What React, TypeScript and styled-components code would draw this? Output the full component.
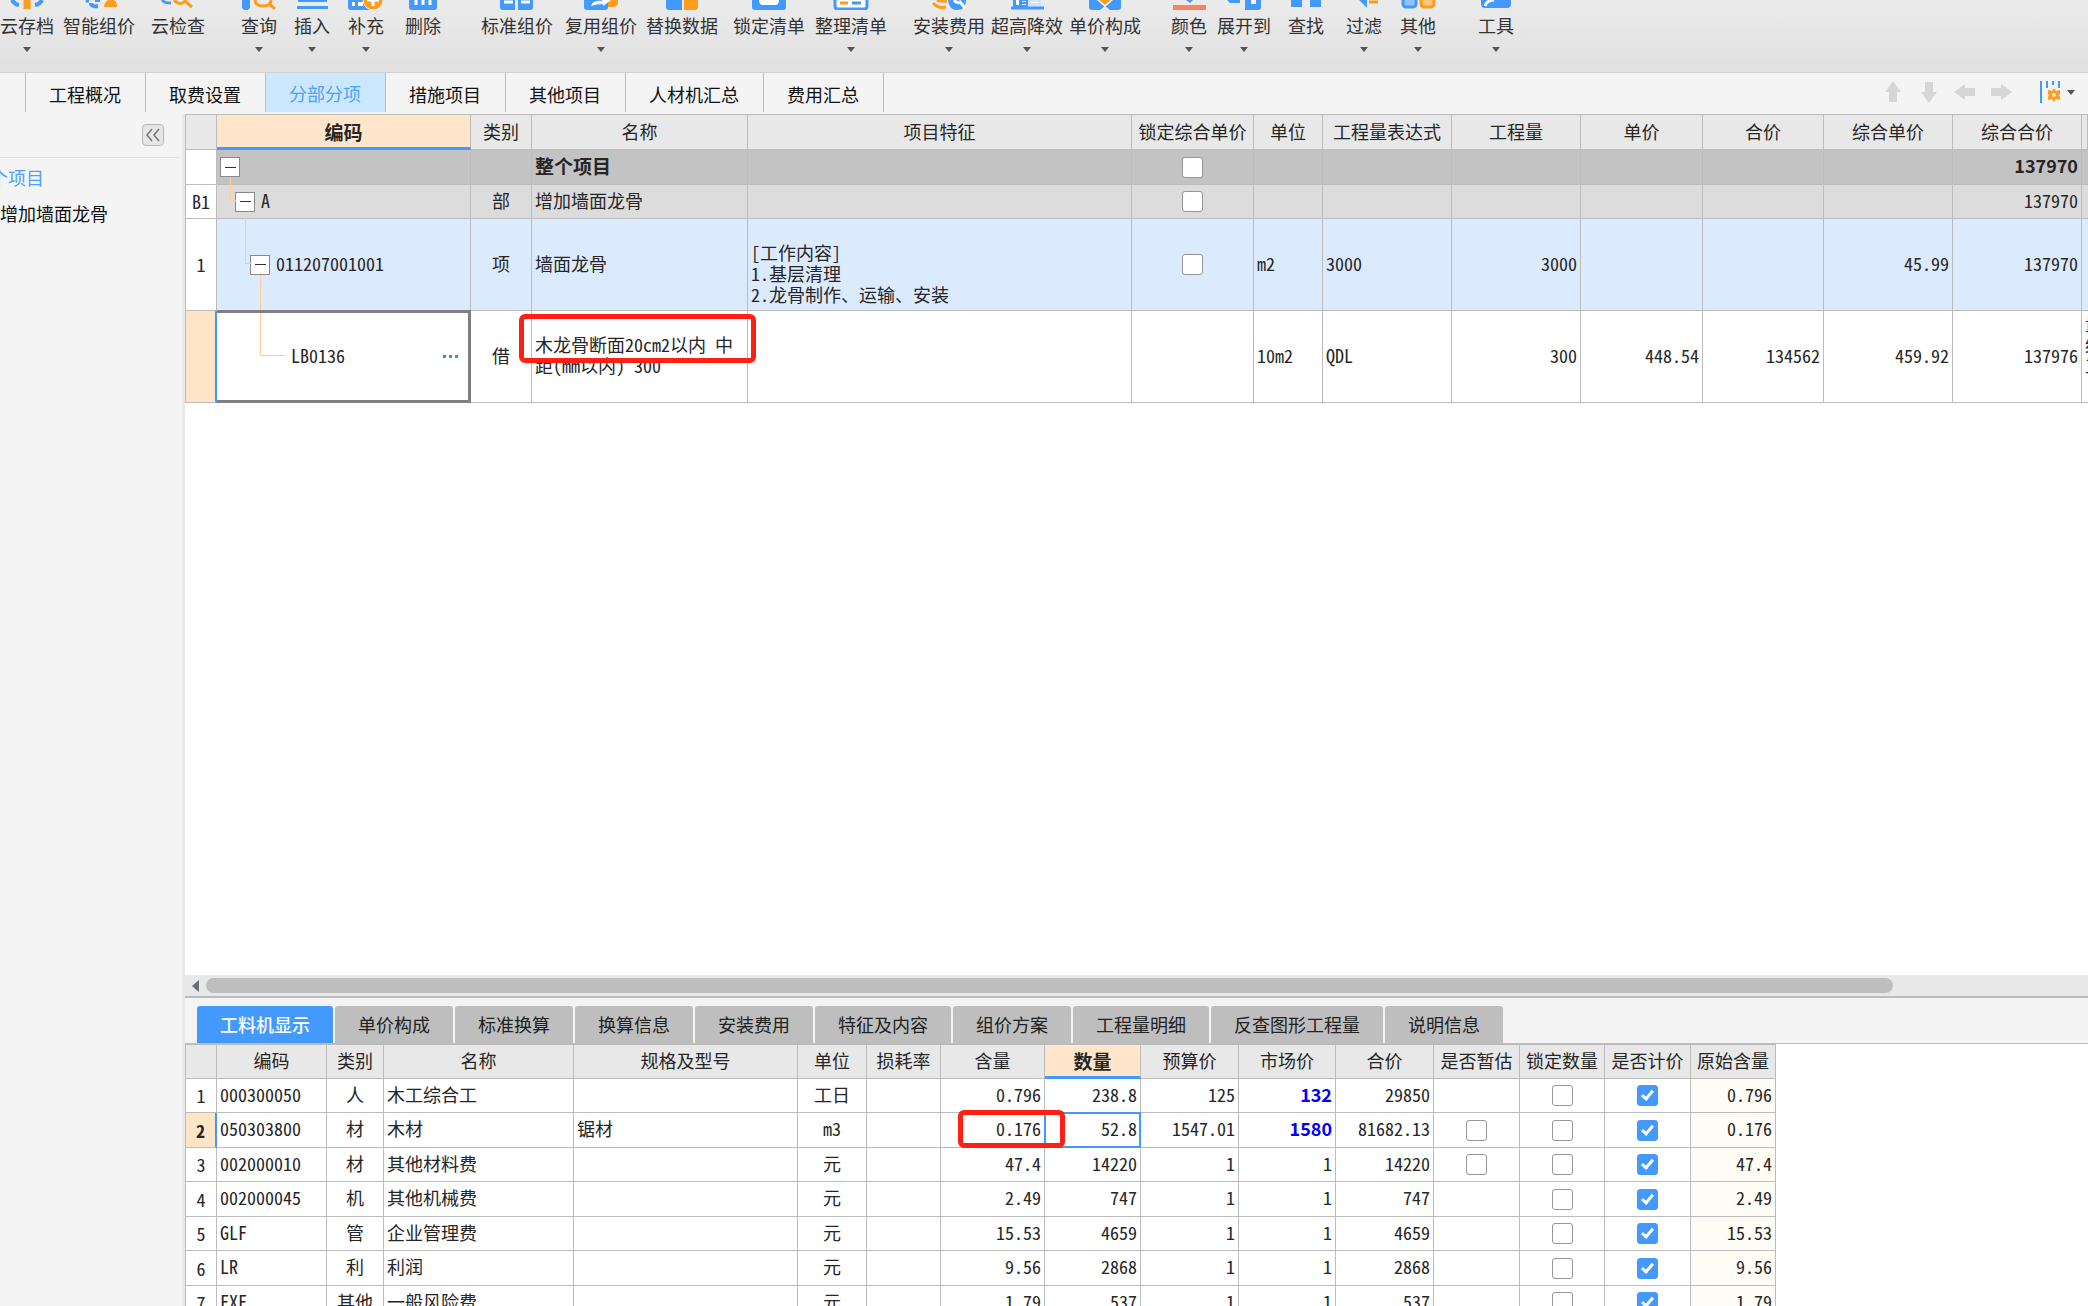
import React from 'react';
import styled, { createGlobalStyle, css } from 'styled-components';

const BLUE = '#4499ff';
const ORANGE = '#ff9c1c';
const LINE = '#bcbcbc';
const RED = '#ff2015';
const UI = '"Noto Sans CJK SC", sans-serif';
const MONO = '"Noto Sans Mono CJK SC", "Noto Sans CJK SC", monospace';

const GlobalStyle = createGlobalStyle`
  *, *::before, *::after { box-sizing: border-box; }
  body { margin: 0; background: #f4f4f4; overflow: hidden; }
  button { margin: 0; padding: 0; border: 0; background: none; font: inherit; color: inherit; cursor: pointer; }
`;

const Page = styled.div`
  display: flex;
  flex-direction: column;
  height: 100vh;
  overflow: hidden;
  font-family: ${UI};
  font-size: 18px;
  line-height: 24px;
  color: #262626;
`;

/* ---------- toolbar ---------- */

const Toolbar = styled.header`
  display: flex;
  flex: none;
  align-items: flex-start;
  height: 73px;
  background: linear-gradient(#ebebeb, #e0e0e0);
  border-bottom: 1px solid #d2d2d2;
`;

const Tool = styled.button<{ $before: number }>`
  display: flex;
  flex: none;
  flex-direction: column;
  align-items: center;
  margin-left: ${(p) => p.$before}px;
  white-space: nowrap;
  color: #333;
`;

const ToolIcon = styled.svg`
  display: block;
  width: 36px;
  height: 10px;
`;

const ToolLabel = styled.span`
  margin-top: 3px;
`;

const Caret = styled.span`
  width: 0;
  height: 0;
  border: 4px solid transparent;
  border-top: 5px solid #555;
  border-bottom: 0;
`;

const ToolCaret = styled(Caret)`
  margin-top: 10px;
`;

const tools: { label: string; before: number; menu?: boolean; icon: React.ReactNode }[] = [
  {
    label: '云存档', before: 0, menu: true,
    icon: <><path d="M3 0Q5 4 10 5M33 0Q31 4 26 5" stroke={BLUE} strokeWidth="4" fill="none" /><path d="M14.500 0h7v9h-7z" fill={ORANGE} /></>,
  },
  {
    label: '智能组价', before: 9,
    icon: <><path d="M5 0L8 1M10 3Q10 7 17 6M14 0h5" stroke={BLUE} strokeWidth="4" fill="none" /><path d="M27 0h6q4 4 4 7H23q0-4 4-7z" fill={ORANGE} /></>,
  },
  {
    label: '云检查', before: 16,
    icon: <><path d="M2 0Q4 3 11 3" stroke={BLUE} strokeWidth="3" fill="none" /><path d="M14 0Q20 7 26 0M26 2l6 5" stroke={ORANGE} strokeWidth="3" fill="none" /></>,
  },
  {
    label: '查询', before: 36, menu: true,
    icon: <><path d="M1 0h8v8l-2 2H3L1 8z" fill={BLUE} /><path d="M14 0q0 6 8 6t8-6M28 4l6 5" stroke={ORANGE} strokeWidth="3" fill="none" /></>,
  },
  {
    label: '插入', before: 17, menu: true,
    icon: <path d="M4 0h29v2H4zM3 6h31v3H3z" fill={BLUE} />,
  },
  {
    label: '补充', before: 18, menu: true,
    icon: <><path d="M0 0h22v10H3q-3 0-3-3z" fill={BLUE} /><path d="M4 2h3v4H4zM10 2h5v4h-5z" fill="#fff" /><circle cx="25" cy="0" r="10" fill={ORANGE} stroke="#eee" /><path d="M19 0h12M25 0v6" stroke="#fff" strokeWidth="3" /></>,
  },
  {
    label: '删除', before: 21,
    icon: <><path d="M4 0h28v7q0 3-3 3H7q-3 0-3-3z" fill={BLUE} /><path d="M11 0v5M18 0v5M25 0v5" stroke="#fff" strokeWidth="3" /></>,
  },
  {
    label: '标准组价', before: 40,
    icon: <><path d="M1 0h15v10H4q-3 0-3-3zM19 0h15v7q0 3-3 3H19z" fill={BLUE} /><path d="M5 2h9M22 2h9" stroke="#fff" strokeWidth="3" /></>,
  },
  {
    label: '复用组价', before: 12, menu: true,
    icon: <><path d="M24 0h11v3q0 4-6 4h-5z" fill={ORANGE} /><path d="M1 0h24v7q0 3-3 3H4q-3 0-3-3z" fill={BLUE} /><path d="M8 6q2-6 11-5V0h9l-8 6V4q-7 0-12 2z" fill="#fff" /></>,
  },
  {
    label: '替换数据', before: 9,
    icon: <><path d="M2 0h16v10H5q-3 0-3-3z" fill={BLUE} /><path d="M20 0h14v7q0 3-3 3H20z" fill={ORANGE} /></>,
  },
  {
    label: '锁定清单', before: 15,
    icon: <><path d="M1 0h34v7q0 3-3 3H4q-3 0-3-3z" fill={BLUE} /><path d="M8 0h20q0 5-4 5H12q-4 0-4-5z" fill="#fff" /></>,
  },
  {
    label: '整理清单', before: 10, menu: true,
    icon: <><path d="M2 0v6q0 3 3 3h26q3 0 3-3V0" fill="#fff" stroke={BLUE} strokeWidth="3" /><path d="M7 3h8" stroke={ORANGE} strokeWidth="3" /><path d="M19 3h9" stroke={BLUE} strokeWidth="3" /></>,
  },
  {
    label: '安装费用', before: 26, menu: true,
    icon: <><path d="M2 3q5 6 13 4M6 0q5 2 10 1" stroke={ORANGE} strokeWidth="3" fill="none" /><path d="M17 0q1 10 9 10 9 0 9-10z" fill={BLUE} /><path d="M23 0q3 4 6 2l5 6" stroke="#fff" strokeWidth="3" fill="none" /></>,
  },
  {
    label: '超高降效', before: 6, menu: true,
    icon: <><path d="M4 0h15v8H4z" fill={BLUE} /><path d="M19 0h13v7H19z" fill="#cfe5ff" /><path d="M2 8h33" stroke={BLUE} strokeWidth="3" /><path d="M7 0h3v5H7zM13 1h4v1h-4zM13 4h4v1h-4zM21 2h9v1h-9z" fill="#fff" /></>,
  },
  {
    label: '单价构成', before: 6, menu: true,
    icon: <><path d="M2 0h32v7q0 3-3 3h-8l-5-4-5 4H5q-3 0-3-3z" fill={BLUE} /><path d="M10 0h16l-8 7z" fill="#fff" /><path d="M12 0h12l-6 5z" fill={ORANGE} /></>,
  },
  {
    label: '颜色', before: 30, menu: true,
    icon: <><path d="M15 0h7l-3 3z" fill={BLUE} /><path d="M2 5h33v5H2z" fill="#f98461" /></>,
  },
  {
    label: '展开到', before: 10, menu: true,
    icon: <><path d="M1 0h13v3H4zM19 0h16v7q0 3-3 3H19z" fill={BLUE} /><path d="M25 0h5v4h-5z" fill="#fff" /></>,
  },
  {
    label: '查找', before: 17,
    icon: <path d="M3 0h11v7H3zM22 0h11v7H22z" fill={BLUE} />,
  },
  {
    label: '过滤', before: 22, menu: true,
    icon: <><path d="M13 0h8v8z" fill={BLUE} /><path d="M23 2h9" stroke={ORANGE} strokeWidth="3" /></>,
  },
  {
    label: '其他', before: 18, menu: true,
    icon: <><rect x="3" y="-8" width="13" height="15" rx="3" fill="#8fc4ff" stroke={BLUE} strokeWidth="3" /><rect x="21" y="-8" width="13" height="15" rx="3" fill="#ffc57d" stroke={ORANGE} strokeWidth="3" /></>,
  },
  {
    label: '工具', before: 42, menu: true,
    icon: <><path d="M3 0h30v4q0 4-4 4H7q-4 0-4-4z" fill={BLUE} /><path d="M7 6q2-6 9-6" stroke="#fff" strokeWidth="3" fill="none" /></>,
  },
];

/* ---------- page tabs ---------- */

const PageTabs = styled.nav`
  display: flex;
  flex: none;
  height: 41px;
  background: #f4f4f4;
`;

const PageTab = styled.button<{ $active?: boolean }>`
  flex: none;
  height: 39px;
  padding: ${(p) => (p.$active ? 0 : 2)}px 24px 0 23px;
  border-right: 1px solid ${LINE};
  white-space: nowrap;
  color: ${(p) => (p.$active ? '#4fa0ff' : '#111')};
  background: ${(p) => (p.$active ? '#cce8ff' : 'transparent')};
`;

const PageTabStub = styled.button`
  flex: none;
  width: 26px;
  height: 39px;
  border-right: 1px solid ${LINE};
`;

const TabActions = styled.div`
  display: flex;
  align-items: center;
  gap: 12px;
  margin-left: auto;
  padding: 0 13px 3px 0;

  svg { display: block; }
`;

const SettingsButton = styled.button`
  display: flex;
  align-items: center;
  gap: 7px;
  margin-left: 15px;
`;

/* ---------- body ---------- */

const Body = styled.div`
  display: flex;
  flex: 1;
  min-height: 0;
`;

const Sidebar = styled.aside`
  flex: none;
  width: 185px;
  overflow: hidden;
  border-right: 3px solid #e9e9e9;
`;

const SidebarHead = styled.div`
  display: flex;
  justify-content: flex-end;
  height: 44px;
  margin-right: 3px;
  padding: 10px 15px 0 0;
  border-bottom: 1px solid #dedede;
`;

const Collapse = styled.button`
  display: grid;
  place-items: center;
  width: 22px;
  height: 22px;
  border: 1px solid #b9b9b9;
  border-radius: 4px;
  background: #e6e6e6;
`;

const SideList = styled.ul`
  display: flex;
  flex-direction: column;
  align-items: flex-start;
  gap: 12px;
  margin: 7px 0 0;
  padding: 0;
  list-style: none;
  white-space: nowrap;
`;

const SideRoot = styled.li`
  width: 44px;
  overflow: hidden;
  direction: rtl;
  color: #4fa0ff;
`;

const SideItem = styled.li`
  color: #111;
`;

const Main = styled.main`
  display: flex;
  flex: 1;
  flex-direction: column;
  min-width: 0;
`;

const GridArea = styled.section`
  flex: 1;
  min-height: 0;
  overflow: hidden;
  background: #fff;
`;

const Grid = styled.table<{ $full?: boolean }>`
  width: ${(p) => (p.$full ? '100%' : 'auto')};
  table-layout: fixed;
  border-collapse: separate;
  border-spacing: 0;
  border-top: 1px solid ${LINE};
  font-family: ${MONO};
  line-height: 21px;
`;

const HeadCell = styled.th<{ $active?: boolean }>`
  padding: 0 0 2px;
  border-right: 1px solid ${LINE};
  border-bottom: 1px solid ${LINE};
  background: #e8e8e8;
  font-weight: 400;
  white-space: nowrap;
  overflow: hidden;

  &:first-child { border-left: 1px solid ${LINE}; }

  ${(p) => p.$active && css`
    padding-bottom: 0;
    border-bottom: 3px solid ${BLUE};
    background: #ffe6ca;
    font-size: 19px;
    font-weight: 700;
  `}
`;

const Row = styled.tr<{ $h: number; $bg?: string; $bold?: boolean }>`
  height: ${(p) => p.$h}px;
  background: ${(p) => p.$bg || '#fff'};
  ${(p) => p.$bold && css`font-family: ${UI}; font-weight: 700;`}
`;

const Cell = styled.td<{ $align?: 'left' | 'center' | 'right'; $bg?: string; $strong?: boolean }>`
  position: relative;
  padding: 0 3px 3px;
  border-right: 1px solid ${LINE};
  border-bottom: 1px solid ${LINE};
  text-align: ${(p) => p.$align || 'left'};
  white-space: pre-line;
  ${(p) => p.$bg && css`background: ${p.$bg};`}
  ${(p) => p.$strong && css`font-family: ${UI}; font-weight: 700; color: #0000ff;`}
`;

const TickCell = styled(Cell)`
  padding: 0;
`;

const RowNo = styled.th<{ $current?: boolean }>`
  padding: 0;
  border: 1px solid ${LINE};
  border-top: 0;
  background: #fff;
  font-weight: 400;
  ${(p) => p.$current && css`
    border-right: 2px solid ${BLUE};
    background: #ffe5c8;
    font-weight: 700;
  `}
`;

const ClippedCell = styled(Cell)`
  padding-top: 2px;
  border-right: 0;
  overflow: hidden;
  vertical-align: top;
  white-space: nowrap;
`;

const BigText = styled.span`
  font-size: 19px;
`;

const Tick = styled.input`
  appearance: none;
  display: block;
  position: relative;
  width: 21px;
  height: 21px;
  margin: 0 auto;
  border: 1px solid #969696;
  border-radius: 3px;
  background: #fff;

  &:checked { border-color: ${BLUE}; background: ${BLUE}; }
  &:checked::after {
    content: '';
    position: absolute;
    left: 6px;
    top: 2px;
    width: 7px;
    height: 12px;
    border: solid #fff;
    border-width: 0 3px 3px 0;
    transform: rotate(40deg);
  }
`;

/* ---------- tree column ---------- */

const TreeCell = styled(Cell)`
  padding-bottom: 0;
`;

const TreeLine = styled.div<{ $indent: number }>`
  display: flex;
  align-items: center;
  gap: 6px;
  padding-left: ${(p) => p.$indent}px;
`;

const TreeText = styled.span`
  padding-bottom: 3px;
`;

const Toggle = styled.button`
  display: grid;
  place-items: center;
  flex: none;
  width: 20px;
  height: 20px;
  border: 1px solid #8a8a8a;
  background: #fff;

  &::before { content: ''; width: 11px; height: 1px; background: #333; }
`;

const Elbow = styled.span<{ $x: number; $w: number }>`
  position: absolute;
  top: -1px;
  left: ${(p) => p.$x}px;
  width: ${(p) => p.$w}px;
  height: 50%;
  border: solid #ffce93;
  border-width: 0 0 1px 1px;
`;

const Stem = styled.span<{ $x: number }>`
  position: absolute;
  top: calc(50% + 10px);
  bottom: 0;
  left: ${(p) => p.$x}px;
  width: 1px;
  background: #ffce93;
`;

const Frame = styled.span<{ $color: string }>`
  position: absolute;
  inset: -1px -1px -1px 0;
  border: 2px solid ${(p) => p.$color};
  pointer-events: none;
`;

const CodeFrame = styled(Frame)`
  border-width: 3px;
  border-left: 0;
`;

const QtyFrame = styled(Frame)`
  left: -1px;
`;

const More = styled.button`
  display: flex;
  gap: 3px;
  margin-left: auto;
  margin-right: 9px;

  i { width: 3px; height: 3px; background: #3b8ede; }
`;

const NameMark = styled.span`
  position: absolute;
  z-index: 2;
  left: -13px;
  top: 3px;
  width: 237px;
  height: 49px;
  border: 5px solid ${RED};
  border-radius: 6px;
`;

const AmountMark = styled(NameMark)`
  left: 17px;
  top: -3px;
  width: 107px;
  height: 38px;
`;

/* ---------- lower panel ---------- */

const ScrollTrack = styled.div`
  display: flex;
  flex: none;
  align-items: center;
  height: 21px;
  padding-left: 7px;
  background: #e8e8e8;
`;

const ScrollArrow = styled.button`
  width: 0;
  height: 0;
  border: 6px solid transparent;
  border-left: 0;
  border-right: 7px solid #666a72;
`;

const ScrollThumb = styled.div`
  flex: 0 1 89%;
  height: 15px;
  margin-left: 7px;
  border-radius: 8px;
  background: #bebebe;
`;

const Detail = styled.section`
  display: flex;
  flex: 0 0 310px;
  flex-direction: column;
  overflow: hidden;
  border-top: 2px solid ${LINE};
`;

const DetailTabs = styled.div`
  display: flex;
  flex: none;
  gap: 2px;
  height: 46px;
  padding: 8px 0 0 12px;
  border-bottom: 1px solid ${LINE};
`;

const DetailTab = styled.button<{ $active?: boolean }>`
  flex: none;
  padding: 0 23px 1px;
  border-radius: 3px 3px 0 0;
  background: ${(p) => (p.$active ? BLUE : '#bebebe')};
  color: ${(p) => (p.$active ? '#fff' : '#222')};
  font-weight: ${(p) => (p.$active ? 500 : 400)};
  white-space: nowrap;
`;

const DetailBody = styled.div`
  flex: 1;
  min-height: 0;
  overflow: hidden;
  background: #fff;
`;

const topCols = [32, 254, 61, 216, 384, 122, 69, 129, 129, 122, 121, 129, 129];
const topHeads = ['', '编码', '类别', '名称', '项目特征', '锁定综合单价', '单位', '工程量表达式', '工程量', '单价', '合价', '综合单价', '综合合价', ''];

const lowCols = [32, 110, 57, 190, 224, 69, 74, 104, 96, 98, 97, 98, 86, 85, 86, 85];
const lowHeads = ['', '编码', '类别', '名称', '规格及型号', '单位', '损耗率', '含量', '数量', '预算价', '市场价', '合价', '是否暂估', '锁定数量', '是否计价', '原始含量'];

interface Item {
  code: string; kind: string; name: string; spec?: string; unit: string;
  per: string; qty: string; budget: string; market: string; total: string; estimate?: boolean;
}

const items: Item[] = [
  { code: '000300050', kind: '人', name: '木工综合工', unit: '工日', per: '0.796', qty: '238.8', budget: '125', market: '132', total: '29850' },
  { code: '050303800', kind: '材', name: '木材', spec: '锯材', unit: 'm3', per: '0.176', qty: '52.8', budget: '1547.01', market: '1580', total: '81682.13', estimate: true },
  { code: '002000010', kind: '材', name: '其他材料费', unit: '元', per: '47.4', qty: '14220', budget: '1', market: '1', total: '14220', estimate: true },
  { code: '002000045', kind: '机', name: '其他机械费', unit: '元', per: '2.49', qty: '747', budget: '1', market: '1', total: '747' },
  { code: 'GLF', kind: '管', name: '企业管理费', unit: '元', per: '15.53', qty: '4659', budget: '1', market: '1', total: '4659' },
  { code: 'LR', kind: '利', name: '利润', unit: '元', per: '9.56', qty: '2868', budget: '1', market: '1', total: '2868' },
  { code: 'FXF', kind: '其他', name: '一般风险费', unit: '元', per: '1.79', qty: '537', budget: '1', market: '1', total: '537' },
];

const Arrow = ({ turn, label }: { turn: number; label: string }) => (
  <button aria-label={label}>
    <svg width="24" height="24" viewBox="0 0 24 24">
      <path d="M12 1l8 11h-4v10H8V12H4z" fill="#d6d6d6" transform={`rotate(${turn} 12 12)`} />
    </svg>
  </button>
);

const Empty = ({ n }: { n: number }) => <>{Array.from({ length: n }, (_, i) => <Cell key={i} />)}</>;

const EstimateTable = () => (
  <Grid $full>
    <colgroup>
      {topCols.map((w, i) => <col key={i} style={{ width: w }} />)}
      <col />
    </colgroup>
    <thead>
      <Row $h={35}>
        {topHeads.map((h, i) => <HeadCell key={i} $active={i === 1}>{h}</HeadCell>)}
      </Row>
    </thead>
    <tbody>
      <Row $h={35} $bg="#c3c3c3" $bold>
        <RowNo />
        <TreeCell>
          <TreeLine $indent={0}><Toggle aria-label="折叠整个项目" /></TreeLine>
          <Stem $x={13} />
        </TreeCell>
        <Cell />
        <Cell><BigText>整个项目</BigText></Cell>
        <Cell />
        <TickCell><Tick type="checkbox" aria-label="锁定综合单价 整个项目" /></TickCell>
        <Empty n={6} />
        <Cell $align="right">137970</Cell>
        <ClippedCell />
      </Row>
      <Row $h={34} $bg="#dcdcdc">
        <RowNo>B1</RowNo>
        <TreeCell>
          <Elbow $x={13} $w={6} />
          <TreeLine $indent={15}><Toggle aria-label="折叠 A" /><TreeText>A</TreeText></TreeLine>
          <Stem $x={28} />
        </TreeCell>
        <Cell $align="center">部</Cell>
        <Cell>增加墙面龙骨</Cell>
        <Cell />
        <TickCell><Tick type="checkbox" aria-label="锁定综合单价 增加墙面龙骨" /></TickCell>
        <Empty n={6} />
        <Cell $align="right">137970</Cell>
        <ClippedCell />
      </Row>
      <Row $h={92} $bg="#dceafe">
        <RowNo>1</RowNo>
        <TreeCell>
          <Elbow $x={28} $w={6} />
          <TreeLine $indent={30}><Toggle aria-label="折叠 011207001001" /><TreeText>011207001001</TreeText></TreeLine>
          <Stem $x={43} />
        </TreeCell>
        <Cell $align="center">项</Cell>
        <Cell>墙面龙骨</Cell>
        <Cell><br />{'[工作内容]\n1.基层清理\n2.龙骨制作、运输、安装'}</Cell>
        <TickCell><Tick type="checkbox" aria-label="锁定综合单价 墙面龙骨" /></TickCell>
        <Cell>m2</Cell>
        <Cell>3000</Cell>
        <Cell $align="right">3000</Cell>
        <Empty n={2} />
        <Cell $align="right">45.99</Cell>
        <Cell $align="right">137970</Cell>
        <ClippedCell />
      </Row>
      <Row $h={92}>
        <RowNo $current />
        <TreeCell>
          <Elbow $x={43} $w={25} />
          <TreeLine $indent={71}><TreeText>LB0136</TreeText><More aria-label="更多"><i /><i /><i /></More></TreeLine>
          <CodeFrame $color="#808080" />
        </TreeCell>
        <Cell $align="center">借</Cell>
        <Cell>{'木龙骨断面20cm2以内 中\n距(mm以内) 300'}<NameMark /></Cell>
        <Empty n={2} />
        <Cell>10m2</Cell>
        <Cell>QDL</Cell>
        <Cell $align="right">300</Cell>
        <Cell $align="right">448.54</Cell>
        <Cell $align="right">134562</Cell>
        <Cell $align="right">459.92</Cell>
        <Cell $align="right">137976</Cell>
        <ClippedCell>量<br />综<br />工</ClippedCell>
      </Row>
    </tbody>
  </Grid>
);

const ResourceTable = () => (
  <Grid style={{ width: lowCols.reduce((a, b) => a + b, 0) }}>
    <colgroup>{lowCols.map((w, i) => <col key={i} style={{ width: w }} />)}</colgroup>
    <thead>
      <Row $h={34}>
        {lowHeads.map((h, i) => <HeadCell key={i} $active={i === 8}>{h}</HeadCell>)}
      </Row>
    </thead>
    <tbody>
      {items.map((r, i) => (
        <Row key={r.code} $h={i % 2 ? 35 : 34}>
          <RowNo $current={i === 1}>{i + 1}</RowNo>
          <Cell>{r.code}</Cell>
          <Cell $align="center">{r.kind}</Cell>
          <Cell>{r.name}</Cell>
          <Cell>{r.spec}</Cell>
          <Cell $align="center">{r.unit}</Cell>
          <Cell />
          <Cell $align="right">{r.per}{i === 1 && <AmountMark />}</Cell>
          <Cell $align="right">{r.qty}{i === 1 && <QtyFrame $color={BLUE} />}</Cell>
          <Cell $align="right">{r.budget}</Cell>
          <Cell $align="right" $strong={i < 2}>{r.market}</Cell>
          <Cell $align="right">{r.total}</Cell>
          <TickCell>{r.estimate && <Tick type="checkbox" aria-label={`是否暂估 ${r.name}`} />}</TickCell>
          <TickCell><Tick type="checkbox" aria-label={`锁定数量 ${r.name}`} /></TickCell>
          <TickCell><Tick type="checkbox" defaultChecked aria-label={`是否计价 ${r.name}`} /></TickCell>
          <Cell $align="right" $bg="#fffcf6">{r.per}</Cell>
        </Row>
      ))}
    </tbody>
  </Grid>
);

export default function App() {
  return (
    <Page>
      <GlobalStyle />
      <Toolbar>
        {tools.map((t) => (
          <Tool key={t.label} $before={t.before}>
            <ToolIcon viewBox="0 0 36 10">{t.icon}</ToolIcon>
            <ToolLabel>{t.label}</ToolLabel>
            {t.menu && <ToolCaret />}
          </Tool>
        ))}
      </Toolbar>
      <PageTabs>
        <PageTabStub aria-label="上一页签" />
        {['工程概况', '取费设置', '分部分项', '措施项目', '其他项目', '人材机汇总', '费用汇总'].map((t) => (
          <PageTab key={t} $active={t === '分部分项'}>{t}</PageTab>
        ))}
        <TabActions>
          <Arrow turn={0} label="上移" />
          <Arrow turn={180} label="下移" />
          <Arrow turn={270} label="左移" />
          <Arrow turn={90} label="右移" />
          <SettingsButton aria-label="列设置">
            <svg width="20" height="24" viewBox="0 0 20 24">
              <path d="M0 1h2v22H0zM6 1h2v7H6zM12 1h2v4h-2zM18 1h2v7h-2z" fill={BLUE} />
              <path d="M14 8l2 3 4-1v4l-1 1 1 2v3l-4-1-2 3-2-3-4 1v-3l1-2-1-1v-4l4 1z" fill={ORANGE} />
              <circle cx="14" cy="15" r="2" fill="#f4f4f4" />
            </svg>
            <Caret />
          </SettingsButton>
        </TabActions>
      </PageTabs>
      <Body>
        <Sidebar>
          <SidebarHead>
            <Collapse aria-label="收起">
              <svg width="16" height="14" viewBox="0 0 16 14" fill="none" stroke="#777" strokeWidth="1.500">
                <path d="M7 1L2 7l5 6M14 1L9 7l5 6" />
              </svg>
            </Collapse>
          </SidebarHead>
          <SideList>
            <SideRoot>整个项目</SideRoot>
            <SideItem>增加墙面龙骨</SideItem>
          </SideList>
        </Sidebar>
        <Main>
          <GridArea><EstimateTable /></GridArea>
          <ScrollTrack>
            <ScrollArrow aria-label="向左滚动" />
            <ScrollThumb />
          </ScrollTrack>
          <Detail>
            <DetailTabs>
              {['工料机显示', '单价构成', '标准换算', '换算信息', '安装费用', '特征及内容', '组价方案', '工程量明细', '反查图形工程量', '说明信息'].map((t, i) => (
                <DetailTab key={t} $active={i === 0}>{t}</DetailTab>
              ))}
            </DetailTabs>
            <DetailBody><ResourceTable /></DetailBody>
          </Detail>
        </Main>
      </Body>
    </Page>
  );
}
